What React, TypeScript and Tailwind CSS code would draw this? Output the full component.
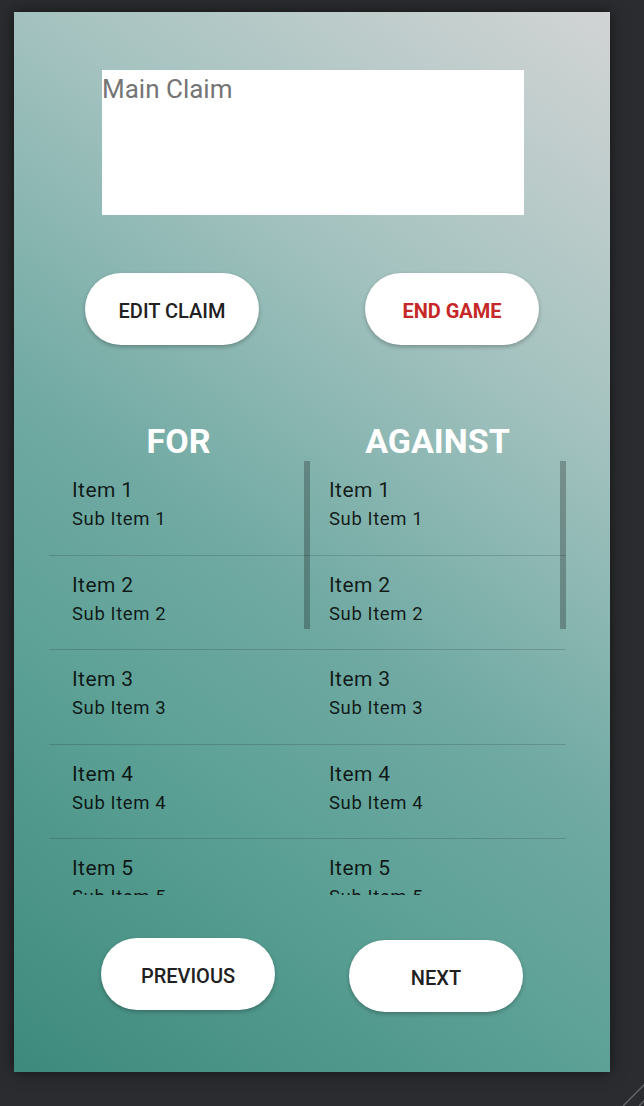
import React from "react";

const items = Array.from({ length: 12 }, (_, i) => i + 1);

function Column({ width, pl }: { width: string; pl: string }) {
  return (
    <div className={`relative h-full overflow-hidden ${width}`}>
      <div className="flex flex-col">
        {items.map((n) => (
          <div
            key={n}
            className={`h-[94.5px] shrink-0 border-b border-black/15 pt-[17px] ${pl}`}
          >
            <div className="text-[21px] leading-[24px] tracking-[0.4px] text-black/85">
              Item {n}
            </div>
            <div className="mt-[6px] text-[18.5px] leading-[22px] tracking-[0.6px] text-black/85">
              Sub Item {n}
            </div>
          </div>
        ))}
      </div>
      <div className="absolute right-0 top-0 h-[168px] w-[6px] bg-black/25" />
    </div>
  );
}

function PillButton({
  label,
  className,
  textClass,
}: {
  label: string;
  className?: string;
  textClass: string;
}) {
  return (
    <div
      className={`flex h-[72px] w-[174px] items-center justify-center rounded-full bg-white pt-[4px] shadow-[0_2px_4px_rgba(0,0,0,0.25)] ${className ?? ""}`}
    >
      <span className={`text-[20px] uppercase ${textClass}`}>{label}</span>
    </div>
  );
}

export default function App() {
  return (
    <div
      className="relative min-h-[1106px] w-full overflow-hidden bg-[#2b2c2f]"
      style={{ fontFamily: "Roboto, 'Noto Sans', sans-serif" }}
    >
      <div className="pl-[14px] pt-[12px]">
        <div className="flex h-[1060px] w-[596px] flex-col bg-[linear-gradient(36deg,#3d8a7c_0%,#5da196_29%,#6fa9a2_45%,#a3c2bf_71%,#d2d4d4_100%)] shadow-[0_0_14px_rgba(0,0,0,0.55)]">
          <div className="ml-[88px] mt-[58px] h-[145px] w-[422px] bg-white pt-[4px]">
            <div className="text-[26px] leading-[30px] text-[#757575]">Main Claim</div>
          </div>

          <div className="mt-[58px] flex pl-[71px]">
            <PillButton label="Edit Claim" textClass="font-medium text-[#212121]" />
            <PillButton
              label="End Game"
              className="ml-[106px]"
              textClass="font-bold text-[#c62828]"
            />
          </div>

          <div className="ml-[35px] mt-[77px] flex">
            <div className="w-[259px] text-center text-[34px] font-bold leading-[39px] text-white">
              FOR
            </div>
            <div className="w-[259px] text-center text-[34px] font-bold leading-[39px] text-white">
              AGAINST
            </div>
          </div>

          <div className="ml-[35px] flex h-[434px]">
            <Column width="w-[261px]" pl="pl-[23px]" />
            <Column width="w-[256px]" pl="pl-[19px]" />
          </div>

          <div className="ml-[87px] mt-[43px] flex items-start">
            <PillButton label="Previous" textClass="font-medium text-[#212121]" />
            <PillButton
              label="Next"
              className="ml-[74px] mt-[2px]"
              textClass="font-medium text-[#212121]"
            />
          </div>
        </div>
      </div>

      <svg
        className="absolute bottom-0 right-0"
        width="24"
        height="24"
        viewBox="0 0 24 24"
      >
        <line x1="3" y1="24" x2="24" y2="3" stroke="#6e6e6e" strokeWidth="1.2" />
        <line x1="19" y1="24" x2="24" y2="19" stroke="#6e6e6e" strokeWidth="1.2" />
      </svg>
    </div>
  );
}
